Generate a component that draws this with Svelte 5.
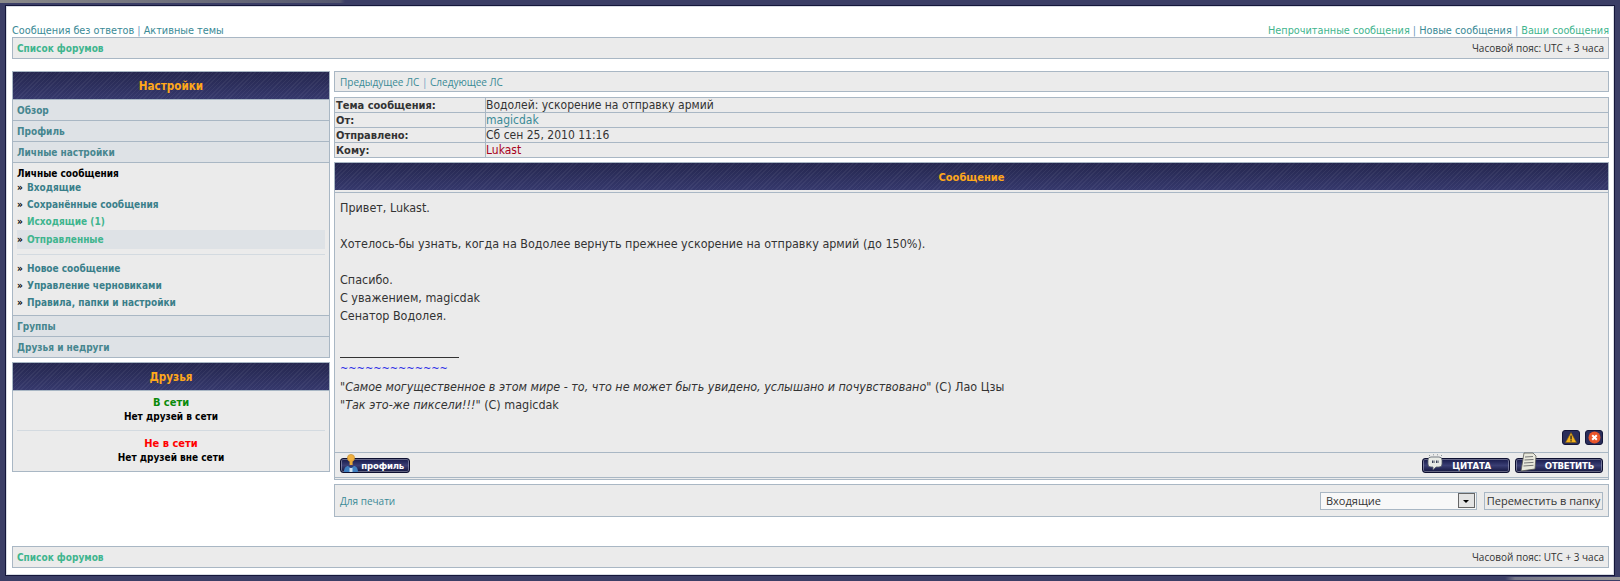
<script>
  const menuTop = [
    { label: "Входящие" },
    { label: "Сохранённые сообщения" },
    { label: "Исходящие (1)", bright: true },
    { label: "Отправленные", bright: true, active: true },
  ];
  const menuBottom = ["Новое сообщение", "Управление черновиками", "Правила, папки и настройки"];
  const details = [
    { key: "Тема сообщения:", value: "Водолей: ускорение на отправку армий" },
    { key: "От:", value: "magicdak", cls: "link" },
    { key: "Отправлено:", value: "Сб сен 25, 2010 11:16" },
    { key: "Кому:", value: "Lukast", cls: "red" },
  ];
</script>

<div class="frame">
  <div class="wrap">
    <div class="toplinks">
      <div><a href="#a">Сообщения без ответов</a> <i>|</i> <a href="#a">Активные темы</a></div>
      <div><a class="bright" href="#a">Непрочитанные сообщения</a> <i>|</i> <a href="#a">Новые сообщения</a> <i>|</i> <a class="bright" href="#a">Ваши сообщения</a></div>
    </div>
    <div class="navbar">
      <a class="crumb" href="#a">Список форумов</a>
      <span class="tz">Часовой пояс: UTC + 3 часа</span>
    </div>

    <div class="columns">
      <aside>
        <div class="box">
          <div class="cat big">Настройки</div>
          <div class="tab">Обзор</div>
          <div class="tab">Профиль</div>
          <div class="tab">Личные настройки</div>
          <div class="menu">
            <div class="menu-title">Личные сообщения</div>
            {#each menuTop as item}
              <div class="menu-item" class:active={item.active} class:bright={item.bright}><b>»</b> <span>{item.label}</span></div>
            {/each}
            <hr />
            {#each menuBottom as label}
              <div class="menu-item"><b>»</b> <span>{label}</span></div>
            {/each}
          </div>
          <div class="tab">Группы</div>
          <div class="tab">Друзья и недруги</div>
        </div>
        <div class="box friends">
          <div class="cat big">Друзья</div>
          <div class="friend-body">
            <div class="on">В сети</div>
            <div class="none">Нет друзей в сети</div>
            <hr />
            <div class="off">Не в сети</div>
            <div class="none">Нет друзей вне сети</div>
          </div>
        </div>
      </aside>

      <main>
        <div class="panel pager"><a href="#a">Предыдущее ЛС</a> <i>|</i> <a href="#a">Следующее ЛС</a></div>
        <div class="details">
          {#each details as row}
            <div class="key">{row.key}</div>
            <div class="val {row.cls ?? ''}">{row.value}</div>
          {/each}
        </div>
        <div class="message">
          <div class="cat">Сообщение</div>
          <div class="post">
            <p>Привет, Lukast.</p>
            <p class="blank"></p>
            <p>Хотелось-бы узнать, когда на Водолее вернуть прежнее ускорение на отправку армий (до 150%).</p>
            <p class="blank"></p>
            <p>Спасибо.</p>
            <p>С уважением, magicdak</p>
            <p>Сенатор Водолея.</p>
            <div class="sig-line"></div>
            <div class="tilde">~~~~~~~~~~~~~</div>
            <p><em>"Самое могущественное в этом мире - то, что не может быть увидено, услышано и почувствовано"</em> (С) Лао Цзы</p>
            <p><em>"Так это-же пиксели!!!"</em> (С) magicdak</p>
            <div class="report">
              <span class="mini">
                <svg width="12" height="11" viewBox="0 0 12 11"><path d="M6 .5 11.500 10.500H.5z" fill="#f2b01e" stroke="#7a5a10" stroke-width=".6" /><rect x="5.400" y="3.500" width="1.300" height="4" fill="#222" /><rect x="5.400" y="8.200" width="1.300" height="1.300" fill="#222" /></svg>
              </span>
              <span class="mini">
                <svg width="13" height="13" viewBox="0 0 13 13"><circle cx="6.500" cy="6.500" r="6" fill="#e8542a" /><path d="M4.200 4.200l4.600 4.600M8.800 4.200l-4.600 4.600" stroke="#fff" stroke-width="2" /></svg>
              </span>
            </div>
          </div>
          <div class="actions">
            <span class="btn profile">
              <svg class="ico" width="18" height="19" viewBox="0 0 18 19"><circle cx="8" cy="4" r="3.600" fill="#f0b040" stroke="#c08a28" stroke-width=".6" /><rect x="6.600" y="6" width="3" height="5" fill="#e8a838" /><path d="M1 18c0-4 2-6 4-6l3 2 3-2c2 0 4 2 4 6z" fill="#3f7fc0" /><path d="M6.500 14h3v4h-3z" fill="#cfe0ee" /></svg>
              <span class="lbl">профиль</span>
            </span>
            <div class="right-btns">
              <span class="btn quote">
                <svg class="ico bubble" width="18" height="19" viewBox="0 0 18 19"><path d="M5 3h8a3 3 0 0 1 3 3v4a3 3 0 0 1-3 3h-3l-3 3v-3H5a3 3 0 0 1-3-3V6a3 3 0 0 1 3-3z" fill="#e9ebe6" stroke="#59606a" stroke-width=".8" /><path d="M6.500 6.500v2.500M8 6.500v2.500M10.500 6.500v2.500M12 6.500v2.500" stroke="#3a4258" /><path d="M3 1.500h1M7 .8h1M11 .8h1M15 1.500h1" stroke="#8a9499" /></svg>
                <span class="lbl">ЦИТАТА</span>
              </span>
              <span class="btn reply">
                <svg class="ico" width="20" height="21" viewBox="0 0 20 21"><path d="M6 1l9 0 3 3-1 13-14 2z" fill="#e8e8dc" stroke="#5a5a55" stroke-width=".8" /><path d="M7 5l8-.5M6.500 8l9-.5M6 11l9.500-.6M5.500 14l10-.7" stroke="#777" /></svg>
                <span class="lbl">ОТВЕТИТЬ</span>
              </span>
            </div>
          </div>
        </div>
        <div class="panel printbar">
          <a href="#a">Для печати</a>
          <div class="move">
            <div class="select"><span>Входящие</span><span class="arrow"></span></div>
            <div class="go">Переместить в папку</div>
          </div>
        </div>
      </main>
    </div>

    <div class="navbar bottom">
      <a class="crumb" href="#a">Список форумов</a>
      <span class="tz">Часовой пояс: UTC + 3 часа</span>
    </div>
  </div>
</div>

<style>
  :global(body) {
    margin: 0;
    background: #3b3e66;
  }

  .frame {
    box-sizing: border-box;
    height: 580px;
    padding: 5px 5px 0;
    overflow: hidden;
    background:
      linear-gradient(90deg, #8a8a8a, #55586f 340px, transparent 345px) 0 0 / 100% 3px no-repeat,
      linear-gradient(90deg, transparent 1505px, #77798a 1515px, #9a9a9a) 0 100% / 100% 3px no-repeat;
  }

  .wrap {
    box-sizing: border-box;
    height: 571px;
    background: #fff;
    border: 1px solid #14163a;
    outline: 1px solid #d8dce4;
    outline-offset: -2px;
    padding: 18px 5px 0 6px;
    font-family: "DejaVu Sans Condensed", "DejaVu Sans", sans-serif;
    color: #333;
  }

  a {
    color: #3a8a96;
    text-decoration: none;
  }

  .bright,
  .bright span {
    color: #3fb58e;
  }

  i {
    font-style: normal;
    color: #6a9cc0;
  }

  .toplinks {
    display: flex;
    justify-content: space-between;
    height: 13px;
    line-height: 14px;
    font-size: 10.8px;
  }

  .navbar {
    box-sizing: border-box;
    height: 22px;
    display: flex;
    justify-content: space-between;
    align-items: center;
    background: #ebebeb;
    border: 1px solid #a9b7c4;
    padding: 0 4px;
  }

  .crumb {
    font-size: 10px;
    font-weight: 700;
    color: #3fb58e;
  }

  .tz {
    font-family: "Open Sans", sans-serif;
    font-size: 10px;
    color: #333;
  }

  .bottom {
    margin-top: 29px;
  }

  .columns {
    display: grid;
    grid-template-columns: 318px 1fr;
    column-gap: 4px;
    margin-top: 12px;
    height: 446px;
  }

  .box {
    border: 1px solid #a9b7c4;
    border-top: 0;
  }

  .cat {
    box-sizing: border-box;
    height: 28px;
    line-height: 30px;
    text-align: center;
    font-size: 11px;
    font-weight: 700;
    color: #ffa81a;
    background: repeating-linear-gradient(135deg, rgba(255, 255, 255, 0.05) 0 1px, transparent 1px 3px), linear-gradient(#25274f, #35386c);
    border-top: 1px solid #a9b7c4;
    margin: 0 -1px;
    border-left: 1px solid #a9b7c4;
    border-right: 1px solid #a9b7c4;
  }

  .cat.big {
    font-size: 11.600px;
    line-height: 28px;
  }

  .tab {
    box-sizing: border-box;
    height: 21px;
    line-height: 22px;
    padding-left: 4px;
    background: #dee2e6;
    border-top: 1px solid #a9b7c4;
    font-size: 10px;
    font-weight: 700;
    color: #46868f;
  }

  .menu {
    box-sizing: border-box;
    height: 153px;
    background: #ebebeb;
    border-top: 1px solid #a9b7c4;
    padding: 4px 4px 0;
    font-size: 10px;
    font-weight: 700;
  }

  .menu-title {
    height: 12px;
    line-height: 13px;
    color: #000;
  }

  .menu-item {
    height: 17px;
    line-height: 17px;
    color: #000;
  }

  .menu-item span {
    margin-left: 1px;
    color: #3a7f8a;
  }

  .menu-item.bright span {
    color: #3fb58e;
  }

  .menu-item.active {
    background: #dee2e6;
    height: 19px;
    line-height: 19px;
  }

  hr {
    border: 0;
    border-top: 1px solid #d3dae0;
    margin: 5px 0 5px;
  }

  .friends {
    margin-top: 4px;
  }

  .friend-body {
    box-sizing: border-box;
    height: 81px;
    background: #ebebeb;
    border-top: 1px solid #a9b7c4;
    padding: 4px 4px 0;
    text-align: center;
    font-size: 10px;
    font-weight: 700;
    color: #000;
  }

  .friend-body .on,
  .friend-body .off {
    font-size: 11px;
    line-height: 15px;
  }

  .on {
    color: #0a8a0a;
  }

  .off {
    color: #f00;
  }

  .none {
    line-height: 14px;
  }

  .friend-body hr {
    margin: 6px 0 5px;
  }

  .panel {
    box-sizing: border-box;
    background: #ebebeb;
    border: 1px solid #a9b7c4;
  }

  .pager {
    height: 21px;
    line-height: 21px;
    padding-left: 5px;
    font-family: "Open Sans", sans-serif;
    font-size: 10px;
  }

  .details {
    display: grid;
    grid-template-columns: 151px 1fr;
    margin-top: 5px;
    background: #ebebeb;
    border: 1px solid #a9b7c4;
    border-bottom: 0;
    font-size: 12px;
  }

  .key,
  .val {
    box-sizing: border-box;
    height: 15px;
    line-height: 15px;
    border-bottom: 1px solid #a9b7c4;
  }

  .key {
    padding-left: 1px;
    border-right: 1px solid #a9b7c4;
    font-size: 11px;
    font-weight: 700;
  }

  .val.link {
    color: #3a8a96;
  }

  .val.red {
    color: #a80020;
  }

  .message {
    margin-top: 4px;
    background: #ebebeb;
    border: 1px solid #a9b7c4;
    border-top: 0;
    border-bottom-width: 3px;
    border-bottom-style: double;
  }

  .post {
    position: relative;
    box-sizing: border-box;
    height: 260px;
    margin-top: 2px;
    border-top: 1px solid #a9b7c4;
    padding: 6px 5px 0;
    font-size: 12.450px;
    line-height: 18px;
    color: #333;
  }

  p {
    margin: 0;
  }

  .blank {
    height: 18px;
  }

  .sig-line {
    width: 119px;
    height: 1px;
    background: #333;
    margin: 32px 0 0;
  }

  .tilde {
    height: 16px;
    margin-top: 4px;
    line-height: 14px;
    font-size: 11px;
    color: #2a2ae8;
  }

  .report {
    position: absolute;
    right: 5px;
    bottom: 7px;
    display: flex;
    gap: 5px;
  }

  .mini {
    box-sizing: border-box;
    width: 18px;
    height: 15px;
    display: flex;
    align-items: center;
    justify-content: center;
    background: #2a2d5a;
    border: 1px solid #14163a;
    border-radius: 3px;
  }

  .actions {
    height: 25px;
    display: flex;
    justify-content: space-between;
    align-items: flex-end;
    padding: 0 5px 4px;
    border-top: 1px solid #a9b7c4;
    box-sizing: border-box;
  }

  .right-btns {
    display: flex;
    gap: 5px;
  }

  .btn {
    position: relative;
    box-sizing: border-box;
    display: block;
    height: 15px;
    background: linear-gradient(#16194a 0, #3a3e74 50%, #14163e 100%);
    border: 1px solid #0d0f30;
    border-radius: 3px;
    box-shadow: inset 0 0 0 1px #ffffff55;
    color: #fff;
    font-size: 9.500px;
    letter-spacing: -0.2px;
    font-weight: 700;
    line-height: 13px;
    text-align: right;
  }

  .ico {
    position: absolute;
    left: 2px;
    bottom: -1px;
  }

  .ico.bubble {
    bottom: -1px;
    left: 3px;
  }

  .profile {
    width: 70px;
  }

  .profile .lbl {
    padding-right: 5px;
  }

  .quote {
    width: 88px;
  }

  .quote .lbl {
    padding-right: 18px;
  }

  .reply {
    width: 88px;
  }

  .reply .lbl {
    padding-right: 8px;
  }

  .printbar {
    height: 33px;
    margin-top: 4px;
    display: flex;
    justify-content: space-between;
    align-items: center;
    padding: 0 5px;
    font-family: "Open Sans", sans-serif;
    font-size: 10px;
  }

  .move {
    display: flex;
    align-items: center;
    gap: 7px;
  }

  .select {
    box-sizing: border-box;
    width: 157px;
    height: 18px;
    display: flex;
    justify-content: space-between;
    align-items: center;
    background: #f8f8f8;
    border: 1px solid #a9b7c4;
    padding: 0 1px 0 5px;
    font-size: 11px;
    color: #333;
  }

  .arrow {
    box-sizing: border-box;
    width: 17px;
    height: 15px;
    border: 1px solid #666;
    background: #e4e4e4;
    position: relative;
  }

  .arrow::after {
    content: "";
    position: absolute;
    left: 4px;
    top: 6px;
    border: 3.500px solid transparent;
    border-top-color: #000;
    border-bottom: 0;
  }

  .go {
    box-sizing: border-box;
    width: 119px;
    height: 18px;
    text-align: center;
    line-height: 16px;
    background: #ebebeb;
    border: 1px solid #a9b7c4;
    font-size: 11px;
    color: #333;
  }
</style>
